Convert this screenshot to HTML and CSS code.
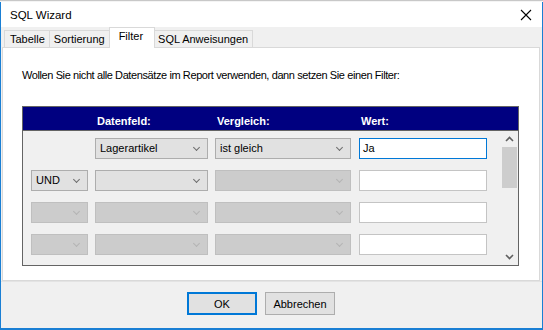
FILE: index.html
```html
<!DOCTYPE html>
<html lang="de">
<head>
  <meta charset="UTF-8" />
  <title>SQL Wizard</title>
  <link rel="stylesheet" href="styles.css">
</head>
<body>
  <div class="behind"></div>

  <div class="window">
    <div class="titlebar">
      <span class="title">SQL Wizard</span>
      <svg class="close" width="12" height="12" viewBox="0 0 12 12">
        <path d="M1 1 L11 11 M11 1 L1 11" stroke="#000" stroke-width="1.1" fill="none"/>
      </svg>
    </div>

    <div class="tabs">
      <div class="tab">Tabelle</div>
      <div class="tab">Sortierung</div>
      <div class="tab active">Filter</div>
      <div class="tab">SQL Anweisungen</div>
    </div>

    <div class="panel">
      <p class="intro">Wollen Sie nicht alle Datensätze im Report verwenden, dann setzen Sie einen Filter:</p>

      <div class="filter-box">
        <div class="filter-head">
          <span></span>
          <span>Datenfeld:</span>
          <span>Vergleich:</span>
          <span>Wert:</span>
        </div>
        <div class="filter-body">
          <div class="rows">
            <div class="row">
              <span></span>
              <div class="combo">Lagerartikel<i class="chev"></i></div>
              <div class="combo">ist gleich<i class="chev"></i></div>
              <div class="field focus">Ja</div>
            </div>
            <div class="row">
              <div class="combo">UND<i class="chev"></i></div>
              <div class="combo"><i class="chev"></i></div>
              <div class="combo off"><i class="chev"></i></div>
              <div class="field"></div>
            </div>
            <div class="row">
              <div class="combo off"><i class="chev"></i></div>
              <div class="combo off"><i class="chev"></i></div>
              <div class="combo off"><i class="chev"></i></div>
              <div class="field"></div>
            </div>
            <div class="row">
              <div class="combo off"><i class="chev"></i></div>
              <div class="combo off"><i class="chev"></i></div>
              <div class="combo off"><i class="chev"></i></div>
              <div class="field"></div>
            </div>
          </div>
          <div class="scrollbar">
            <div class="arrow">
              <svg width="9" height="6" viewBox="0 0 9 6"><path d="M1 5 L4.5 1.5 L8 5" stroke="#606060" stroke-width="1.6" fill="none"/></svg>
            </div>
            <div class="thumb"></div>
            <div class="track"></div>
            <div class="arrow">
              <svg width="9" height="6" viewBox="0 0 9 6"><path d="M1 1 L4.5 4.5 L8 1" stroke="#606060" stroke-width="1.6" fill="none"/></svg>
            </div>
          </div>
        </div>
      </div>
    </div>

    <div class="footer">
      <button class="btn default">OK</button>
      <button class="btn">Abbrechen</button>
    </div>
  </div>
</body>
</html>
```

FILE: styles.css
```css
body {
  margin: 0;
  width: 543px;
  height: 330px;
  overflow: hidden;
  background: #fff;
  font-family: 'Liberation Sans', Arial, sans-serif;
}

.behind {
  height: 2px;
  background: #f4f4f4;
  border-top: 1px solid #c8c8c8;
  box-sizing: border-box;
}

.window {
  height: 328px;
  box-sizing: border-box;
  border: 1px solid #1a7fd4;
  border-top: none;
  border-bottom-width: 2px;
  display: flex;
  flex-direction: column;
  background: #f0f0f0;
}

.titlebar {
  height: 25px;
  background: #fff;
  display: flex;
  align-items: center;
  justify-content: space-between;
  padding: 0 10px 0 9px;
}

.title {
  font-size: 11.5px;
  color: #000;
}

.tabs {
  height: 20px;
  display: flex;
  align-items: flex-end;
  padding-left: 3px;
}

.tab {
  height: 17px;
  box-sizing: border-box;
  border: 1px solid #d9d9d9;
  border-bottom: none;
  border-left: none;
  background: #f0f0f0;
  font-size: 11px;
  padding: 2px 4px 0 4px;
}

.tab:first-child {
  border-left: 1px solid #d9d9d9;
  padding-left: 5px;
}

.tab.active {
  height: 21px;
  margin-bottom: -1px;
  background: #fff;
  border-left: 1px solid #d9d9d9;
  padding: 2px 11px 0 9px;
  margin-left: -1px;
  margin-right: -1px;
  position: relative;
  z-index: 1;
}

.panel {
  height: 234px;
  margin: 0 2px 0 1px;
  background: #fff;
  border: 1px solid #d9d9d9;
  box-sizing: border-box;
  padding: 21px 0 0 19px;
}

.intro {
  margin: 0;
  font-size: 11px;
  letter-spacing: -0.4px;
  color: #000;
}

.filter-box {
  margin-top: 25px;
  width: 497px;
  height: 160px;
  box-sizing: border-box;
  border: 1px solid #646464;
  display: flex;
  flex-direction: column;
}

.filter-head {
  height: 24px;
  background: #000080;
  color: #fff;
  font-size: 11px;
  font-weight: bold;
  display: grid;
  grid-template-columns: 57px 113px 136px 129px;
  column-gap: 7px;
  padding: 8px 0 0 10px;
  box-sizing: border-box;
  border-bottom: 1px solid #646464;
}

.filter-head span:last-child {
  margin-left: 1px;
}

.filter-body {
  flex: 1;
  display: flex;
  background: #f0f0f0;
}

.rows {
  flex: 1;
  padding: 7px 0 0 8px;
  display: flex;
  flex-direction: column;
  gap: 11px;
}

.row {
  display: grid;
  grid-template-columns: 57px 113px 136px 129px;
  column-gap: 7px;
  height: 21px;
}

.row .field {
  margin-left: 1px;
}

.combo {
  position: relative;
  box-sizing: border-box;
  border: 1px solid #adadad;
  background: #e1e1e1;
  font-size: 11px;
  padding: 3px 0 0 4px;
  color: #000;
}

.combo.off {
  background: #cccccc;
  border-color: #bfbfbf;
}

.chev {
  position: absolute;
  right: 8px;
  top: 6px;
  width: 4px;
  height: 4px;
  border-right: 1px solid #6d6d6d;
  border-bottom: 1px solid #6d6d6d;
  transform: rotate(45deg);
}

.combo.off .chev {
  border-color: #b4b4b4;
}

.field {
  box-sizing: border-box;
  border: 1px solid #c4c4c4;
  background: #fff;
  font-size: 11px;
  padding: 3px 0 0 3px;
}

.field.focus {
  border-color: #0078d7;
}

.scrollbar {
  width: 17px;
  display: flex;
  flex-direction: column;
  background: #f0f0f0;
}

.arrow {
  height: 16px;
  display: flex;
  align-items: center;
  justify-content: center;
}

.thumb {
  height: 41px;
  margin: 0 1px 0 1px;
  background: #cdcdcd;
}

.track {
  flex: 1;
}

.footer {
  flex: 1;
  border-top: 1px solid #e3e3e3;
  display: flex;
  gap: 8px;
  padding: 10px 0 0 186px;
}

.btn {
  width: 70px;
  height: 23px;
  box-sizing: border-box;
  border: 1px solid #adadad;
  background: #e1e1e1;
  font-family: 'Liberation Sans', Arial, sans-serif;
  font-size: 11px;
  color: #000;
  padding: 0;
}

.btn.default {
  border: 2px solid #0078d7;
}
```
